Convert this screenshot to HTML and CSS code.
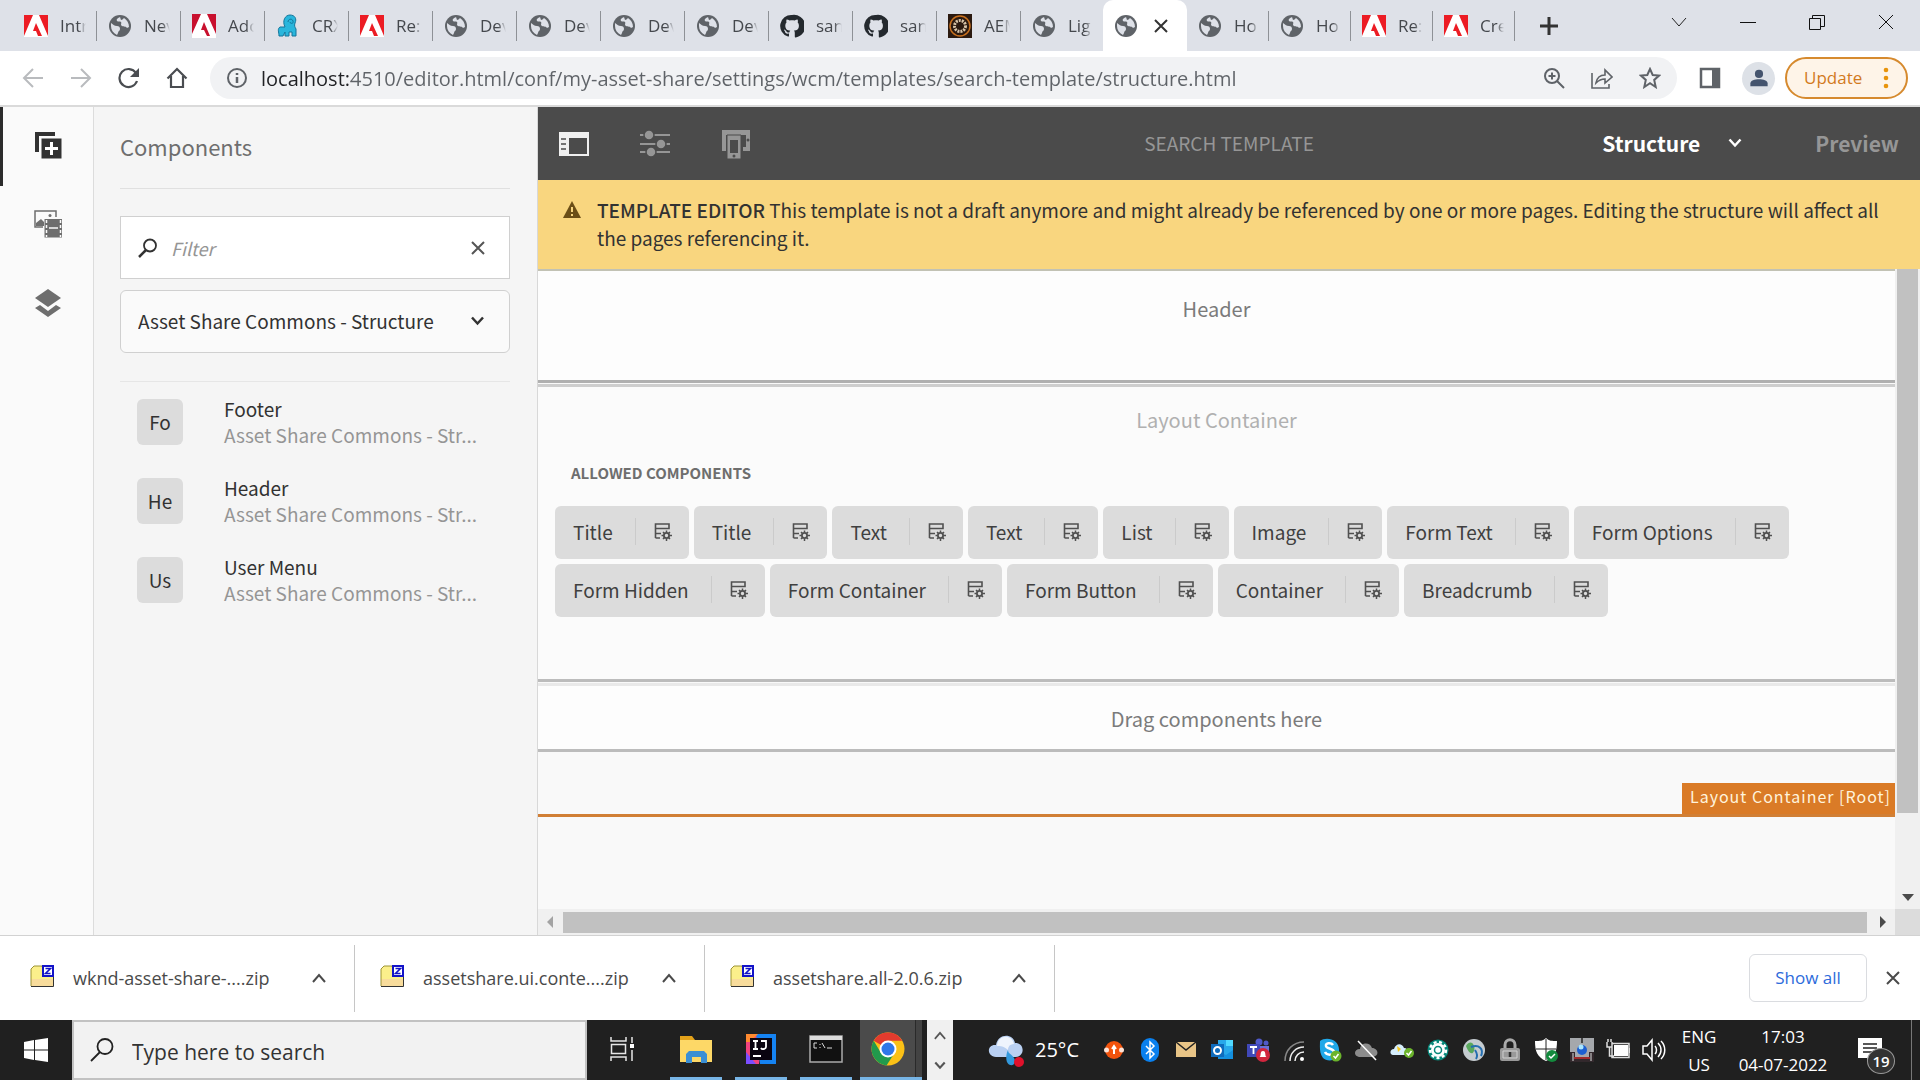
FILE: index.html
```html
<!DOCTYPE html>
<html lang="en">
<head>
    <meta charset="UTF-8">
    <meta name="viewport" content="width=device-width, initial-scale=1.0">
    <title>Search Template</title>
    <link rel="stylesheet" href="styles.css">
</head>
<body>

<!-- shared icons -->
<svg class="sprite" aria-hidden="true">
    <symbol id="i-globe" viewBox="0 0 24 24">
        <circle cx="12" cy="12" r="11" fill="#5f6368"/>
        <path d="M3 9c2 1 3 3 6 3 2 0 3 1 3 3s-2 2-2 4l-1 2C5 19 3 16 3 12zM12 3c-2 1-4 2-3 4 1 1 3 0 4 1s-1 3 1 4 4 0 5 2l2-1c0-4-2-7-5-9-1 1-2 2-3 2z" fill="#dee1e8"/>
    </symbol>
    <symbol id="i-adobe" viewBox="0 0 24 24">
        <path d="M0 1h24v22H0z" fill="#fff"/>
        <path d="M0 1h9L0 22zM15 1h9v21zM12 9l6 13h-4l-2-5H9z" fill="#ec1c24"/>
    </symbol>
    <symbol id="i-adobe-dark" viewBox="0 0 24 24">
        <path d="M0 0h24v24H0z" fill="#fff"/>
        <path d="M0 0h9L0 20zM15 0h9v20zM12 8l6 14h-3l-3-6H9z" fill="#c8102e"/>
    </symbol>
    <symbol id="i-crx" viewBox="0 0 24 24">
        <path d="M3 22c0-4-2-7 1-9h5C6 7 9 1 14 1s7 4 5 8c-1 3 0 4 1 6v7h-4v-4h-3v4H9v-4l-2 4z" fill="#29b6dc" stroke="#14759a"/>
        <path d="M12 8c0-3 4-4 5-1s-3 3-3 1" fill="none" stroke="#14759a"/>
    </symbol>
    <symbol id="i-github" viewBox="0 0 24 24">
        <path d="M12 1a11 11 0 0 0-4 21.500c1 .2 1-.3 1-1v-2c-3 .6-4-1-4-2-.5-1-1-1-1-2 1 0 2 1 2.500 2 1 1.500 2 1 3 .8 0-.8.4-1.300.8-1.700-3-.3-5-1.400-5-5.200 0-1.200.4-2.200 1.200-3-.3-1-.2-2 .1-3 1 0 2 .5 3 1.200 2-.5 3-.5 5 0 1-.7 2-1.200 3-1.200.3 1 .4 2 .1 3 .8.800 1.200 1.800 1.200 3 0 3.800-2 5-5 5.200.6.500.9 1.200.9 2.200v3.700c0 .7.300 1.200 1 1A11 11 0 0 0 12 1z" fill="#24292e"/>
    </symbol>
    <symbol id="i-aem" viewBox="0 0 24 24">
        <path d="M0 0h24v24H0z" fill="#2b1a10"/>
        <circle cx="12" cy="12" r="10" fill="none" stroke="#c8701e" stroke-width="1.500"/>
        <circle cx="12" cy="12" r="5.500" fill="none" stroke="#d8c4a8" stroke-width="3" stroke-dasharray="2 1"/>
    </symbol>
    <symbol id="i-policy" viewBox="0 0 18 18">
        <path d="M1.500 15V1H15v4.500H1.500M1.500 10.500H7M1.500 15H6" fill="none" stroke="#505050" stroke-width="1.600"/>
        <circle cx="12.500" cy="12.500" r="2.600" fill="none" stroke="#505050" stroke-width="1.800"/>
        <path d="M12.500 7.500v2M12.500 15.500v2.500M7.500 12.500h2M15.500 12.500h2.500M9 9l1.400 1.400M14.600 14.600 16 16M9 16l1.400-1.400M14.600 10.400 16 9" stroke="#505050" stroke-width="1.500"/>
    </symbol>
    <symbol id="i-zip" viewBox="0 0 24 24">
        <path d="M1 5l3-3h8l1 3h10v17H1z" fill="#fbef8b"/>
        <path d="M1 15h22v7H1z" fill="#f8dc9c"/>
        <path d="M1 22V5l3-3h8l1 3" fill="none" stroke="#9c9434"/>
        <path d="M1 22.500h22.500V12" fill="none" stroke="#333"/>
        <path d="M13 2h10v10H13z" fill="#fff" stroke="#1414c8" stroke-width="2"/>
        <path d="M15.500 4.500h5l-5 5h5" fill="none" stroke="#1414c8" stroke-width="1.600"/>
    </symbol>
    <symbol id="i-up" viewBox="0 0 14 10">
        <path d="M1 9l6-7 6 7" fill="none" stroke="currentColor" stroke-width="2"/>
    </symbol>
    <symbol id="i-down" viewBox="0 0 14 10">
        <path d="M1.500 1.500 7 7.500l5.500-6" fill="none" stroke="currentColor" stroke-width="2.500"/>
    </symbol>
    <symbol id="i-close" viewBox="0 0 14 14">
        <path d="M1 1l12 12M13 1 1 13" fill="none" stroke="currentColor" stroke-width="2"/>
    </symbol>
</svg>

<div class="tab-strip">
    <button class="tab"><svg><use href="#i-adobe"/></svg><span>Intr</span></button>
    <button class="tab"><svg><use href="#i-globe"/></svg><span>Nev</span></button>
    <button class="tab"><svg><use href="#i-adobe-dark"/></svg><span>Ado</span></button>
    <button class="tab"><svg><use href="#i-crx"/></svg><span>CRX</span></button>
    <button class="tab"><svg><use href="#i-adobe"/></svg><span>Re:</span></button>
    <button class="tab"><svg><use href="#i-globe"/></svg><span>Dev</span></button>
    <button class="tab"><svg><use href="#i-globe"/></svg><span>Dev</span></button>
    <button class="tab"><svg><use href="#i-globe"/></svg><span>Dev</span></button>
    <button class="tab"><svg><use href="#i-globe"/></svg><span>Dev</span></button>
    <button class="tab"><svg><use href="#i-github"/></svg><span>san</span></button>
    <button class="tab"><svg><use href="#i-github"/></svg><span>san</span></button>
    <button class="tab"><svg><use href="#i-aem"/></svg><span>AEM</span></button>
    <button class="tab tab-last"><svg><use href="#i-globe"/></svg><span>Lig</span></button>
    <div class="tab tab-active">
        <svg><use href="#i-globe"/></svg>
        <button class="tab-close" aria-label="Close tab"><svg><use href="#i-close"/></svg></button>
    </div>
    <button class="tab tab-narrow"><svg><use href="#i-globe"/></svg><span>Ho</span></button>
    <button class="tab tab-narrow"><svg><use href="#i-globe"/></svg><span>Ho</span></button>
    <button class="tab tab-narrow"><svg><use href="#i-adobe"/></svg><span>Re:</span></button>
    <button class="tab tab-narrow"><svg><use href="#i-adobe"/></svg><span>Cre</span></button>
    <button class="new-tab" aria-label="New tab"><svg viewBox="0 0 18 18"><path d="M9 0v18M0 9h18" stroke="#333" stroke-width="3"/></svg></button>
    <div class="window-buttons">
        <button aria-label="Search tabs"><svg viewBox="0 0 16 16"><path d="M1 4l7 8 7-8" fill="none" stroke="#222"/></svg></button>
        <button aria-label="Minimize"><svg viewBox="0 0 16 16"><path d="M0 8.500h16" stroke="#111"/></svg></button>
        <button aria-label="Restore"><svg viewBox="0 0 16 16"><path d="M.5 4.500h11v11H.5zM3.500 4V1.500h12v11H12" fill="none" stroke="#111"/></svg></button>
        <button aria-label="Close"><svg viewBox="0 0 16 16"><path d="M1 1l14 14M15 1 1 15" stroke="#111"/></svg></button>
    </div>
</div>

<div class="browser-bar">
    <div class="nav-buttons">
        <button aria-label="Back"><svg viewBox="0 0 22 22"><path d="M21 11H2M11 2l-9 9 9 9" fill="none" stroke="#b9bbbe" stroke-width="2"/></svg></button>
        <button aria-label="Forward"><svg viewBox="0 0 22 22"><path d="M1 11h19M11 2l9 9-9 9" fill="none" stroke="#b9bbbe" stroke-width="2"/></svg></button>
        <button aria-label="Reload"><svg viewBox="0 0 22 22"><path d="M19 14a9 9 0 1 1-1-8" fill="none" stroke="#4a4d51" stroke-width="2.200"/><path d="M21 1v9h-9z" fill="#4a4d51"/></svg></button>
        <button aria-label="Home"><svg viewBox="0 0 22 22"><path d="M1.500 11.500 11 2l9.500 9.500M5 9v11h12V9" fill="none" stroke="#4a4d51" stroke-width="2.200"/></svg></button>
    </div>
    <div class="address">
        <svg class="icon-22" viewBox="0 0 22 22"><circle cx="11" cy="11" r="9" fill="none" stroke="#5f6368" stroke-width="2"/><path d="M11 10v6M11 6v2" stroke="#5f6368" stroke-width="2.500"/></svg>
        <input class="url" type="text" aria-label="Address" value="localhost:4510/editor.html/conf/my-asset-share/settings/wcm/templates/search-template/structure.html">
        <button aria-label="Zoom"><svg viewBox="0 0 22 22"><circle cx="9" cy="9" r="7" fill="none" stroke="#5f6368" stroke-width="2"/><path d="M14 14l7 7M9 5.500v7M5.500 9h7" stroke="#5f6368" stroke-width="2"/></svg></button>
        <button aria-label="Share"><svg viewBox="0 0 22 22"><path d="M1 6v15h17v-4M5 16c1-6 4-8 9-8V3l7 7-7 6v-4c-4 0-6 1-9 4z" fill="none" stroke="#5f6368" stroke-width="1.600"/></svg></button>
        <button aria-label="Bookmark"><svg viewBox="0 0 22 22"><path d="M11 2l2.700 6 6.300.6-4.800 4.300L16.700 20 11 16.200 5.300 20l1.500-7.100L2 8.600 8.300 8z" fill="none" stroke="#5f6368" stroke-width="2"/></svg></button>
    </div>
    <button class="side-panel" aria-label="Side panel"><svg viewBox="0 0 22 22"><path d="M2 2h18v18H2z" fill="none" stroke="#5f6368" stroke-width="2.500"/><path d="M13 2h7v18h-7z" fill="#5f6368"/></svg></button>
    <button class="avatar" aria-label="Profile"><svg viewBox="0 0 22 22"><circle cx="11" cy="6.500" r="4.500" fill="#44546e"/><path d="M1.500 20v-3c0-6 19-6 19 0v3z" fill="#44546e"/></svg></button>
    <button class="update">Update<svg viewBox="0 0 6 22"><g fill="#e8940c"><circle cx="3" cy="3" r="2.300"/><circle cx="3" cy="11" r="2.300"/><circle cx="3" cy="19" r="2.300"/></g></svg></button>
</div>

<main class="editor">
    <nav class="rail">
        <button class="rail-item rail-active" aria-label="Components"><svg viewBox="0 0 28 28"><path d="M1 1h20v4H5v16H1z" fill="#323232"/><path d="M7.500 7.500h20v20h-20z" fill="#323232"/><path d="M17.500 11v13M11 17.500h13" stroke="#fff" stroke-width="3"/></svg></button>
        <button class="rail-item" aria-label="Assets"><svg viewBox="0 0 28 28"><path d="M9 17H1V1h21v6" fill="none" stroke="#6e6e6e" stroke-width="1.500"/><path d="M2 16v-3l5-4 3 3v4z" fill="#6e6e6e"/><circle cx="16" cy="5.500" r="1.500" fill="#6e6e6e"/><path d="M10.500 9h18v18.500h-18z" fill="#6e6e6e"/><path d="M12.500 10v17M26.500 10v17" stroke="#fafafa" stroke-width="1.500" stroke-dasharray="3 2"/><path d="M15 18h9" stroke="#fafafa" stroke-width="1.500"/></svg></button>
        <button class="rail-item" aria-label="Content tree"><svg viewBox="0 0 28 28"><path d="M14 0l13 9-13 9L1 9z" fill="#6e6e6e"/><path d="M1 19l5-3 8 6 8-6 5 3-13 9z" fill="#6e6e6e"/></svg></button>
    </nav>

    <aside class="components">
        <h1>Components</h1>
        <div class="filter">
            <svg viewBox="0 0 20 20"><circle cx="12" cy="7.500" r="6" fill="none" stroke="#323232" stroke-width="1.800"/><path d="M8 12 1 19" stroke="#323232" stroke-width="2.500"/></svg>
            <input type="text" placeholder="Filter" aria-label="Filter">
            <button aria-label="Clear filter"><svg><use href="#i-close"/></svg></button>
        </div>
        <div class="group-select">
            <select aria-label="Component group"><option>Asset Share Commons - Structure</option></select>
            <svg><use href="#i-down"/></svg>
        </div>
        <ul class="component-list">
            <li>
                <span class="thumb">Fo</span>
                <div class="component-text">
                    <p class="component-name">Footer</p>
                    <p class="component-group">Asset Share Commons - Str...</p>
                </div>
            </li>
            <li>
                <span class="thumb">He</span>
                <div class="component-text">
                    <p class="component-name">Header</p>
                    <p class="component-group">Asset Share Commons - Str...</p>
                </div>
            </li>
            <li>
                <span class="thumb">Us</span>
                <div class="component-text">
                    <p class="component-name">User Menu</p>
                    <p class="component-group">Asset Share Commons - Str...</p>
                </div>
            </li>
        </ul>
    </aside>

    <section class="workspace">
        <header class="editor-bar">
            <div class="editor-tools">
                <button aria-label="Toggle side panel"><svg viewBox="0 0 30 30"><path d="M0 3h30v24H0z" fill="#f0f0f0"/><path d="M10 9h18v16H10z" fill="#4b4b4b"/><path d="M2 10h5M2 15h5M2 20h5" stroke="#4b4b4b" stroke-width="1.500"/></svg></button>
                <button aria-label="Page information"><svg viewBox="0 0 30 30"><path d="M0 6h30M0 15h30M0 23h30" stroke="#969696" stroke-width="2"/><g fill="#969696" stroke="#4b4b4b" stroke-width="1.500"><circle cx="9" cy="6" r="5"/><circle cx="21" cy="15" r="5"/><circle cx="11" cy="23" r="5"/></g></svg></button>
                <button aria-label="Emulator"><svg viewBox="0 0 30 30"><path d="M1 22V1h28v21h-7v-4h3V6H5v16z" fill="#969696"/><path d="M6 6h14v24H6z" fill="#969696" stroke="#4b4b4b"/><path d="M9 11h8v13H9z" fill="#4b4b4b"/><circle cx="13" cy="27" r="1.500" fill="#4b4b4b"/><circle cx="27" cy="11" r="1.500" fill="#4b4b4b"/></svg></button>
            </div>
            <h2>SEARCH TEMPLATE</h2>
            <div class="editor-modes">
                <button class="mode-structure">Structure<svg><use href="#i-down"/></svg></button>
                <button class="mode-preview">Preview</button>
            </div>
        </header>

        <div class="notice">
            <svg viewBox="0 0 18 18"><path d="M9 0l9 17H0z" fill="#6b4e16"/><path d="M9 6v5M9 13v2" stroke="#f9d67f" stroke-width="2"/></svg>
            <p><strong>TEMPLATE EDITOR</strong> This template is not a draft anymore and might already be referenced by one or more pages. Editing the structure will affect all the pages referencing it.</p>
        </div>

        <div class="frame">
            <div class="canvas">
                <div class="slot slot-header">Header</div>
                <div class="slot slot-layout">
                    <p class="slot-title">Layout Container</p>
                    <h3>ALLOWED COMPONENTS</h3>
                    <ul class="allowed">
                        <li>Title<button aria-label="Title policy"><svg><use href="#i-policy"/></svg></button></li>
                        <li>Title<button aria-label="Title policy"><svg><use href="#i-policy"/></svg></button></li>
                        <li>Text<button aria-label="Text policy"><svg><use href="#i-policy"/></svg></button></li>
                        <li>Text<button aria-label="Text policy"><svg><use href="#i-policy"/></svg></button></li>
                        <li>List<button aria-label="List policy"><svg><use href="#i-policy"/></svg></button></li>
                        <li>Image<button aria-label="Image policy"><svg><use href="#i-policy"/></svg></button></li>
                        <li>Form Text<button aria-label="Form Text policy"><svg><use href="#i-policy"/></svg></button></li>
                        <li>Form Options<button aria-label="Form Options policy"><svg><use href="#i-policy"/></svg></button></li>
                        <li>Form Hidden<button aria-label="Form Hidden policy"><svg><use href="#i-policy"/></svg></button></li>
                        <li>Form Container<button aria-label="Form Container policy"><svg><use href="#i-policy"/></svg></button></li>
                        <li>Form Button<button aria-label="Form Button policy"><svg><use href="#i-policy"/></svg></button></li>
                        <li>Container<button aria-label="Container policy"><svg><use href="#i-policy"/></svg></button></li>
                        <li>Breadcrumb<button aria-label="Breadcrumb policy"><svg><use href="#i-policy"/></svg></button></li>
                    </ul>
                </div>
                <div class="slot slot-drop">Drag components here</div>
                <div class="root-end"><span>Layout Container [Root]</span></div>
            </div>
            <div class="scroll-y">
                <div class="scroll-y-thumb"></div>
                <svg viewBox="0 0 12 8"><path d="M0 1h12L6 8z" fill="#4b4b4b"/></svg>
            </div>
            <div class="scroll-x">
                <svg viewBox="0 0 8 12"><path d="M7 0v12L1 6z" fill="#a3a3a3"/></svg>
                <div class="scroll-x-thumb"></div>
                <svg viewBox="0 0 8 12"><path d="M1 0v12l6-6z" fill="#4b4b4b"/></svg>
            </div>
            <div class="scroll-corner"></div>
        </div>
    </section>
</main>

<div class="downloads">
    <div class="download">
        <svg class="zip"><use href="#i-zip"/></svg><span>wknd-asset-share-....zip</span>
        <button aria-label="Options"><svg><use href="#i-up"/></svg></button>
    </div>
    <div class="download">
        <svg class="zip"><use href="#i-zip"/></svg><span>assetshare.ui.conte....zip</span>
        <button aria-label="Options"><svg><use href="#i-up"/></svg></button>
    </div>
    <div class="download">
        <svg class="zip"><use href="#i-zip"/></svg><span>assetshare.all-2.0.6.zip</span>
        <button aria-label="Options"><svg><use href="#i-up"/></svg></button>
    </div>
    <button class="show-all">Show all</button>
    <button class="close-shelf" aria-label="Close downloads"><svg><use href="#i-close"/></svg></button>
</div>

<footer class="taskbar">
    <button class="start" aria-label="Start"><svg viewBox="0 0 24 24"><path d="M0 4l10-2v9.500H0zM11 2l13-2v11.500H11zM0 12.500h10V22L0 20zM11 12.500h13V24l-13-2z" fill="#fff"/></svg></button>
    <div class="task-search">
        <svg viewBox="0 0 24 24"><circle cx="15" cy="8.500" r="7.500" fill="none" stroke="#222" stroke-width="1.800"/><path d="M10 14 1 23" stroke="#222" stroke-width="1.800"/></svg>
        <input type="text" placeholder="Type here to search" aria-label="Search">
    </div>
    <div class="apps">
        <button aria-label="Task view"><svg viewBox="0 0 34 34"><path d="M5 5v4h15V5M5 29v-4h15v4M5.500 12.500h14v9h-14zM26 5v6M26 18v11" fill="none" stroke="#e6e6e6" stroke-width="1.500"/><path d="M24 12h4v4h-4z" fill="#fff"/></svg></button>
        <button class="running" aria-label="File Explorer"><svg viewBox="0 0 34 34"><path d="M1 4h12l3 4h17v22H1z" fill="#e3a21a"/><path d="M1 8h32v22H1z" fill="#fdd867"/><path d="M7 31v-9l3-3h15l3 3v9h-6v-6h-9v6z" fill="#3b8fd4"/></svg></button>
        <button class="running" aria-label="IntelliJ IDEA"><svg viewBox="0 0 34 34"><path d="M2 2h17l-4 30H2z" fill="#f0437f"/><path d="M12 2h20v30H16z" fill="#1583f2"/><path d="M2 20l10 12H2z" fill="#7b4dff"/><path d="M2 2h12l-8 8H2z" fill="#ff8a30"/><path d="M6 6h22v22H6z" fill="#0a0410"/><path d="M9 9h5M11.500 9v8M9 17h5M17 9h5v6c0 2-4 3-5 1M9 24h8" fill="none" stroke="#fff" stroke-width="1.800"/></svg></button>
        <button class="running" aria-label="Command Prompt"><svg viewBox="0 0 34 34"><path d="M1 4h32v26H1z" fill="#111" stroke="#aaa" stroke-width="1.500"/><path d="M1 4h32v4H1z" fill="#ddd"/><path d="M8 11H5v5h3M11 12v1M11 15v1M13 11l3 5M18 16h5" fill="none" stroke="#ddd"/></svg></button>
        <button class="running app-active" aria-label="Chrome"><svg viewBox="0 0 34 34"><circle cx="17" cy="17" r="16.500" fill="#fbc116"/><path d="M17 17 2.700 8.800A16.500 16.500 0 0 1 31.300 8.800H17z" fill="#e33b2e"/><path d="M17 17l6.500 4-8 12.400A16.500 16.500 0 0 1 2.700 8.800L10 21z" fill="#229a4c"/><circle cx="17" cy="17" r="8.500" fill="#fff"/><circle cx="17" cy="17" r="6.500" fill="#2f77e8"/></svg></button>
    </div>
    <div class="app-scroll">
        <button aria-label="Previous"><svg><use href="#i-up"/></svg></button>
        <button aria-label="Next"><svg><use href="#i-down"/></svg></button>
    </div>
    <div class="weather">
        <svg viewBox="0 0 36 36"><path d="M8 25C-2 24-1 12 8 13 10 1 25 1 27 11c10 0 10 13 1 14z" fill="#b9d0f2"/><path d="M9 14c1-12 15-12 17-2-5 0-6 4-6 6-4-4-8-4-11-4z" fill="#eef4fd"/><path d="M20 18c-3 6-2 14 2 15 5 1 6-4 4-7-2-4-6-4-6-8z" fill="#3299dd"/><circle cx="31" cy="30" r="5" fill="#e0112b"/></svg>
        25°C
    </div>
    <div class="tray">
        <svg viewBox="0 0 24 24"><circle cx="12" cy="12" r="9" fill="#f2530c"/><path d="M12 16V9M10 11l2-3 2 3" fill="none" stroke="#fff" stroke-width="2"/><circle cx="4.500" cy="12" r="2.500" fill="#fde3d6"/><circle cx="19.500" cy="12" r="2.500" fill="#fde3d6"/></svg>
        <svg viewBox="0 0 24 24"><rect x="3" width="18" height="24" rx="9" fill="#0a80ee"/><path d="M8 8l8 8-4 4V4l4 4-8 8" fill="none" stroke="#fff" stroke-width="1.500"/></svg>
        <svg viewBox="0 0 24 24"><path d="M2 4h20v15H2z" fill="#e9c587"/><path d="M2 4l10 8 10-8" fill="none" stroke="#222" stroke-width="1.500"/></svg>
        <svg viewBox="0 0 24 24"><path d="M8 2h15v19H8z" fill="#28a8ea"/><path d="M16 2h7v6h-7z" fill="#50d9ff"/><path d="M8 13l8 4 7-5v9H8z" fill="#1490df"/><path d="M1 6h13v13H1z" fill="#0f6cbd"/><circle cx="7.500" cy="12.500" r="3.500" fill="none" stroke="#fff" stroke-width="2"/></svg>
        <svg viewBox="0 0 24 24"><circle cx="13" cy="4" r="3.500" fill="#5059c9"/><circle cx="20" cy="5" r="2.500" fill="#5059c9"/><path d="M8 8h15v7c0 5-15 6-15 0z" fill="#6a70d8"/><path d="M1 6h13v13H1z" fill="#4048b8"/><path d="M4 9h7M7.500 9v7" stroke="#fff" stroke-width="1.800"/><circle cx="17" cy="17" r="7" fill="#d1263e"/><path d="M13.500 19c2-1 0-6 3.500-6s1.500 5 3.500 6z" fill="#fff"/></svg>
        <svg viewBox="0 0 24 24"><g fill="none" stroke="#eee" stroke-width="1.500"><path d="M3 23C3 12 11 4 22 4" opacity=".5"/><path d="M8 23c0-8 6-14 14-14M13 23c0-5 4-9 9-9"/></g><circle cx="20" cy="21" r="2" fill="#fff"/></svg>
        <svg viewBox="0 0 24 24"><path d="M2 3c6-5 20-2 19 10 2 9-11 12-16 7C1 15 2 8 2 3z" fill="#20a8e8"/><path d="M15 7c-2-3-8-2-7 1 0 3 8 2 8 6 0 3-7 4-9 0" fill="none" stroke="#fff" stroke-width="2.500"/><circle cx="18" cy="18" r="5.500" fill="#6bb42c"/><path d="M15.500 18l2 2 3-4" fill="none" stroke="#fff" stroke-width="1.500"/></svg>
        <svg viewBox="0 0 24 24"><path d="M5 19c-6-1-5-8 1-8 1-7 10-7 12-1 6 0 8 8 1 9z" fill="#8c8c8c"/><path d="M4 3l18 19" stroke="#fff" stroke-width="1.500"/></svg>
        <svg viewBox="0 0 24 24"><path d="M3 17c-4-1-3-6 1-6 2-6 8-6 10-1 5 0 5 7 1 7z" fill="#d6eefc"/><path d="M7 8l4 3-3 3z" fill="#f8c820"/><circle cx="19" cy="15" r="5" fill="#6bb42c"/><path d="M16.500 15l2 2 3-4" fill="none" stroke="#fff" stroke-width="1.500"/></svg>
        <svg viewBox="0 0 24 24"><circle cx="12" cy="12" r="10.500" fill="#07887a"/><circle cx="12" cy="12" r="7" fill="#fff"/><circle cx="12" cy="12" r="8" fill="none" stroke="#fff" stroke-width="2.500" stroke-dasharray="3 2.500"/><circle cx="12" cy="12" r="3.500" fill="none" stroke="#07887a" stroke-width="1.500"/></svg>
        <svg viewBox="0 0 24 24"><circle cx="12" cy="12" r="11" fill="#c5ccd0"/><path d="M4 8c5-8 10 0 8 5S6 14 4 8z" fill="#58a85c"/><path d="M9 9c8-3 13 2 10 9M13 12c2 3 3 6 1 9" fill="none" stroke="#256eb0" stroke-width="2"/></svg>
        <svg viewBox="0 0 24 24"><path d="M7 11V7c0-7 10-7 10 0v4" fill="none" stroke="#aaa" stroke-width="3"/><rect x="2" y="10" width="20" height="13" rx="2" fill="#999"/><path d="M5 13h14v7H5z" fill="none" stroke="#d0d0d0"/><path d="M12 14v5" stroke="#333" stroke-width="2.500"/></svg>
        <svg viewBox="0 0 24 24"><path d="M12 0c3 3 6 3 11 3 0 10-2 16-11 20C3 19 1 13 1 3c5 0 8 0 11-3z" fill="#fff"/><path d="M12 1v21M2 11h20" stroke="#222"/><circle cx="18" cy="18" r="6" fill="#138a3d"/><path d="M15 18l2 2 4-4" fill="none" stroke="#fff" stroke-width="1.500"/></svg>
        <svg viewBox="0 0 24 24"><path d="M0 0h24v24H0z" fill="#a5a8ac"/><path d="M0 14h5v10H0zM19 14h5v10h-5zM5 20h14v4H5z" fill="#32282c"/><path d="M3 15v8M21 15v8" stroke="#ddd"/><circle cx="12" cy="12" r="5" fill="#1d5fd0"/><circle cx="11" cy="9" r="2.500" fill="#a9e6ff"/><path d="M4 20h16" stroke="#a02a2a" stroke-width="2"/><path d="M12 0v5" stroke="#444" stroke-width="2"/></svg>
        <svg viewBox="0 0 24 24"><path d="M8 7h14v11H8z" fill="#fff"/><path d="M6 5.500h17v14H6zM1 4v5h5V4M2 1v3M5 1v3M3.500 9v9H8M23.500 10v5" fill="none" stroke="#ddd" stroke-width="1.500"/></svg>
        <svg viewBox="0 0 24 24"><path d="M1 8h4l5-6v20l-5-6H1zM13 8c2 2 2 6 0 8M16 5c4 4 4 10 0 14M19 3c5 5 5 13 0 18" fill="none" stroke="#fff" stroke-width="1.500"/></svg>
    </div>
    <div class="clock language"><span>ENG</span><span>US</span></div>
    <div class="clock"><span>17:03</span><span>04-07-2022</span></div>
    <button class="notifications" aria-label="Notifications">
        <svg viewBox="0 0 24 24"><path d="M0 0h24v20H12l-3 4v-4H0z" fill="#fff"/><path d="M5 6h14M5 10h14M5 14h9" stroke="#222" stroke-width="1.500"/></svg>
        <span class="badge">19</span>
    </button>
</footer>

</body>
</html>
```
FILE: styles.css
```css
* {
    box-sizing: border-box;
}
body {
    margin: 0;
    min-height: 100vh;
    display: flex;
    flex-direction: column;
    font-family: "Noto Sans CJK SC", "Noto Sans", sans-serif;
    font-size: 19px;
    line-height: 26px;
    color: #323232;
    background-color: #fff;
}
h1, h2, h3, p, ul {
    margin: 0;
    padding: 0;
    font-weight: 400;
}
ul {
    list-style: none;
}
button, input, select {
    font: inherit;
    color: inherit;
    border: none;
    background: none;
    padding: 0;
    margin: 0;
    outline: none;
}
button {
    cursor: pointer;
}
svg {
    display: block;
    flex: none;
}
.sprite {
    position: absolute;
    width: 0;
    height: 0;
}

/* browser tabs */
.tab-strip {
    display: flex;
    height: 51px;
    padding-left: 13px;
    background-color: #dee1e8;
    font-family: "Open Sans", "Noto Sans", sans-serif;
    font-size: 17px;
    color: #45484d;
}
.tab {
    width: 84px;
    flex: none;
    display: flex;
    align-items: center;
    gap: 12px;
    padding: 0 11px;
    text-align: left;
    background: linear-gradient(#8e9196, #8e9196) right center / 1px 30px no-repeat;
}
.tab > svg {
    width: 24px;
    height: 24px;
}
.tab span {
    flex: 1;
    overflow: hidden;
    white-space: nowrap;
    -webkit-mask-image: linear-gradient(90deg, #000 70%, transparent);
    mask-image: linear-gradient(90deg, #000 70%, transparent);
}
.tab-last {
    width: 82px;
    background: none;
}
.tab-active {
    background: #fff;
    border-radius: 10px 10px 0 0;
}
.tab-close svg {
    width: 14px;
    height: 14px;
    margin-left: 4px;
    color: #333;
}
.tab-narrow {
    width: 82px;
}
.new-tab {
    width: 68px;
}
.new-tab svg {
    width: 18px;
    height: 18px;
    margin: 0 auto;
}
.window-buttons {
    display: flex;
    margin-left: auto;
    height: 44px;
}
.window-buttons button {
    width: 69px;
}
.window-buttons svg {
    width: 16px;
    height: 16px;
    margin: 0 auto;
}

/* address bar */
.browser-bar {
    display: flex;
    align-items: center;
    height: 56px;
    padding: 0 12px 0 22px;
    border-bottom: 2px solid #dadada;
    font-family: "Open Sans", "Noto Sans", sans-serif;
}
.browser-bar svg {
    width: 22px;
    height: 22px;
}
.nav-buttons {
    display: flex;
    gap: 26px;
    margin-right: 22px;
}
.address {
    flex: 1;
    display: flex;
    align-items: center;
    gap: 26px;
    height: 42px;
    padding: 0 16px;
    border-radius: 21px;
    background-color: #f1f2f4;
}
.address .icon-22 {
    margin-right: -13px;
}
.url {
    flex: 1;
    height: 40px;
    font-size: 20px;
    color: #5f6368;
    -webkit-text-fill-color: transparent;
    background: linear-gradient(90deg, #202124 90px, #5f6368 90px);
    -webkit-background-clip: text;
    background-clip: text;
}
.side-panel {
    margin-left: 22px;
}
.avatar {
    width: 33px;
    height: 33px;
    margin: 0 10px 0 21px;
    border-radius: 50%;
    background-color: #dde1e7;
}
.avatar svg {
    width: 20px;
    margin: 0 auto;
}
.update {
    display: flex;
    align-items: center;
    justify-content: space-between;
    width: 123px;
    height: 42px;
    padding: 0 17px 0 17px;
    border: 2px solid #d68a2e;
    border-radius: 21px;
    background-color: #fef4e8;
    color: #d27a1d;
    font-size: 17px;
}
.update svg {
    width: 6px;
}

/* left side */
.editor {
    flex: 1;
    display: flex;
    min-height: 0;
}
.rail {
    width: 94px;
    flex: none;
    border-right: 1px solid #dcdcdc;
    background-color: #fafafa;
}
.rail-item {
    display: flex;
    align-items: center;
    justify-content: center;
    width: 100%;
    height: 79px;
    padding-bottom: 3px;
    border-left: 3px solid transparent;
}
.rail-active {
    border-left-color: #2b2b2b;
}
.rail-item svg {
    width: 28px;
    height: 28px;
}
.components {
    width: 444px;
    flex: none;
    padding: 0 27px 0 26px;
    border-right: 1px solid #d8d8d8;
    background-color: #f5f5f5;
}
.components h1 {
    height: 82px;
    margin-bottom: 27px;
    border-bottom: 1px solid #e0e0e0;
    font-size: 22px;
    line-height: 78px;
    color: #6e6e6e;
}
.filter {
    display: flex;
    align-items: center;
    gap: 13px;
    height: 63px;
    margin-bottom: 11px;
    padding: 0 24px 0 17px;
    border: 1px solid #d0d0d0;
    background-color: #fff;
}
.filter > svg {
    width: 20px;
    height: 20px;
}
.filter input {
    flex: 1;
    min-width: 0;
    font-size: 18px;
}
.filter input::placeholder {
    color: #959595;
    font-style: italic;
}
.filter button svg {
    width: 14px;
    height: 14px;
    color: #555;
}
.group-select {
    display: flex;
    align-items: center;
    height: 63px;
    margin-bottom: 28px;
    padding: 0 24px 2px 17px;
    border: 1px solid #d0d0d0;
    border-radius: 6px;
    background-color: #fafafa;
}
.group-select select {
    flex: 1;
    appearance: none;
}
.group-select svg {
    width: 15px;
    height: 10px;
}
.component-list {
    border-top: 1px solid #e6e6e6;
    padding-top: 11px;
}
.component-list li {
    display: flex;
    gap: 41px;
    height: 79px;
    padding: 3px 0 0 17px;
}
.thumb {
    width: 46px;
    height: 46px;
    flex: none;
    margin-top: 3px;
    border-radius: 6px;
    background-color: #dcdcdc;
    text-align: center;
    line-height: 46px;
}
.component-text {
    flex: 1;
    min-width: 0;
}
.component-group {
    color: #959595;
    white-space: nowrap;
}

/* template editor */
.workspace {
    flex: 1;
    min-width: 0;
    display: flex;
    flex-direction: column;
}
.editor-bar {
    display: grid;
    grid-template-columns: 1fr auto 1fr;
    align-items: center;
    height: 73px;
    padding: 0 21px;
    background-color: #4b4b4b;
    color: #969696;
}
.editor-tools {
    display: flex;
    gap: 51px;
}
.editor-tools svg {
    width: 30px;
    height: 30px;
}
.editor-bar h2 {
    padding-bottom: 2px;
    font-size: 19px;
}
.editor-modes {
    display: flex;
    justify-content: flex-end;
    gap: 73px;
    padding-bottom: 2px;
    font-size: 21px;
    font-weight: 700;
}
.mode-structure {
    display: flex;
    align-items: center;
    gap: 28px;
    color: #fff;
}
.mode-structure svg {
    width: 14px;
    height: 10px;
}
.notice {
    display: flex;
    gap: 16px;
    min-height: 89px;
    padding: 16px 36px 16px 25px;
    background-color: #f9d67f;
    line-height: 28px;
}
.notice svg {
    width: 18px;
    height: 18px;
    margin-top: 5px;
}
.notice strong {
    font-weight: 500;
}
.frame {
    flex: 1;
    display: grid;
    grid-template-columns: 1fr 25px;
    grid-template-rows: 1fr 26px;
    min-height: 0;
}
.canvas {
    overflow: hidden;
    border-top: 2px solid #c2c2b4;
    background-color: #f9f9f9;
}
.slot {
    border-bottom: 3px solid #bcbcbc;
    background-color: #fdfdfd;
    text-align: center;
    font-size: 20px;
    color: #7b7b7b;
}
.slot-header {
    height: 112px;
    padding-top: 25px;
    border-color: #b0b0b0;
}
.slot-layout {
    height: 298px;
    margin-top: 1px;
    padding: 20px 17px 0;
    border-top: 3px solid #cecece;
    background-color: #fbfbfb;
}
.slot-title {
    color: #b0b0b0;
}
.slot-layout h3 {
    margin: 27px 0 20px 16px;
    text-align: left;
    font-size: 15px;
    font-weight: 700;
    color: #6e6e6e;
}
.allowed {
    display: flex;
    flex-wrap: wrap;
    gap: 5px;
    max-width: 1260px;
}
.allowed li {
    display: flex;
    align-items: center;
    gap: 22px;
    height: 53px;
    padding: 0 0 2px 18px;
    border-radius: 6px;
    background-color: #dcdcdc;
    font-size: 19px;
    color: #404040;
}
.allowed button {
    height: 34px;
    padding: 0 17px 0 19px;
    background: linear-gradient(#cbcbcb, #cbcbcb) left center / 1px 27px no-repeat;
}
.allowed svg {
    width: 18px;
    height: 18px;
}
.slot-drop {
    height: 69px;
    margin-top: 1px;
    padding-top: 20px;
    border-top: 3px solid #e9e9e9;
}
.root-end {
    display: flex;
    justify-content: flex-end;
    align-items: flex-end;
    height: 65px;
    border-bottom: 3px solid #d17f35;
}
.root-end span {
    padding: 0 4px 5px 8px;
    background-color: #da7b27;
    color: #fff3dc;
    font-size: 16px;
    letter-spacing: 1px;
}
.scroll-y {
    display: flex;
    flex-direction: column;
    justify-content: space-between;
    padding: 0 2px 8px;
    background-color: #f0f0f0;
}
.scroll-y-thumb {
    height: 86%;
    background-color: #c1c1c1;
}
.scroll-y svg {
    width: 12px;
    height: 8px;
    margin: 0 auto;
}
.scroll-x {
    display: flex;
    align-items: center;
    gap: 9px;
    padding: 0 8px;
    background-color: #f0f0f0;
}
.scroll-x svg {
    width: 8px;
    height: 12px;
}
.scroll-x-thumb {
    flex: 1;
    height: 21px;
    margin-right: 3px;
    background-color: #c1c1c1;
}
.scroll-corner {
    background-color: #dcdcdc;
}

/* download shelf */
.downloads {
    display: flex;
    align-items: center;
    height: 85px;
    padding: 0 20px 0 5px;
    border-top: 1px solid #d2d2d2;
    font-family: "Open Sans", "Noto Sans", sans-serif;
    font-size: 18px;
    color: #4a4a4a;
}
.download {
    display: flex;
    align-items: center;
    width: 350px;
    height: 67px;
    padding: 0 28px 0 25px;
    border-right: 1px solid #c6c6c6;
}
.zip {
    width: 24px;
    height: 24px;
    margin: 0 19px 5px 0;
}
.download button {
    margin-left: auto;
}
.download button svg {
    width: 14px;
    height: 10px;
}
.show-all {
    width: 118px;
    height: 48px;
    margin-left: auto;
    border: 1px solid #dadce0;
    border-radius: 6px;
    color: #2d6bdb;
    font-size: 17px;
}
.close-shelf {
    margin-left: 19px;
}
.close-shelf svg {
    width: 14px;
    height: 14px;
}

/* windows taskbar */
.taskbar {
    display: flex;
    align-items: center;
    height: 60px;
    background-color: #202020;
    color: #fff;
    font-family: "Open Sans", "Noto Sans", sans-serif;
    font-size: 17px;
}
.start {
    width: 72px;
}
.start svg {
    width: 24px;
    height: 24px;
    margin: 0 auto;
}
.task-search {
    display: flex;
    align-items: center;
    gap: 18px;
    width: 515px;
    height: 60px;
    padding-left: 16px;
    border: 2px solid #c2c2c2;
    background-color: #f2f2f2;
}
.task-search svg {
    width: 24px;
    height: 24px;
}
.task-search input {
    flex: 1;
    padding-top: 3px;
    font-size: 21px;
}
.task-search input::placeholder {
    color: #333;
}
.apps {
    display: flex;
    gap: 13px;
    margin-left: 10px;
    height: 60px;
}
.apps button {
    width: 52px;
    border-bottom: 3px solid transparent;
}
.apps svg {
    width: 34px;
    height: 34px;
    margin: 0 auto;
}
.apps .running {
    border-bottom-color: #77b5e6;
}
.apps .app-active {
    width: 62px;
    margin-left: -5px;
    padding-right: 7px;
    background: linear-gradient(90deg, #4b4b4b 55px, #2a2a2a 55px, #2a2a2a 56px, #434343 56px);
}
.apps button:first-child {
    margin-right: 8px;
}
.app-scroll {
    display: flex;
    flex-direction: column;
    justify-content: space-around;
    width: 26px;
    height: 60px;
    margin-left: 5px;
    background-color: #f0f0f0;
    color: #555;
}
.app-scroll svg {
    width: 12px;
    height: 9px;
    margin: 0 auto;
}
.weather {
    display: flex;
    align-items: center;
    gap: 11px;
    margin-left: auto;
    font-size: 20px;
}
.weather svg {
    width: 36px;
    height: 36px;
}
.tray {
    display: flex;
    gap: 12px;
    margin: 0 6px 0 23px;
}
.tray svg {
    width: 24px;
    height: 24px;
}
.clock {
    display: flex;
    flex-direction: column;
    align-items: center;
    width: 114px;
    padding-top: 1px;
    line-height: 28px;
}
.language {
    width: 54px;
}
.notifications {
    position: relative;
    width: 72px;
    height: 60px;
    margin-right: 8px;
    border-right: 1px solid #777;
}
.notifications svg {
    width: 24px;
    height: 24px;
    margin-left: 18px;
}
.badge {
    position: absolute;
    left: 27px;
    top: 28px;
    width: 28px;
    height: 26px;
    border: 1px solid #999;
    border-radius: 50%;
    background-color: #333;
    color: #fff;
    font-size: 15px;
    font-weight: 600;
    line-height: 24px;
}
```
